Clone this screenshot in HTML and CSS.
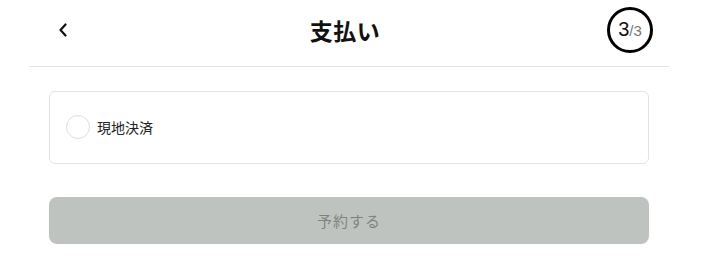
FILE: index.html
```html
<!DOCTYPE html>
<html lang="ja">
<head>
    <meta charset="UTF-8">
    <meta name="viewport" content="width=device-width, initial-scale=1.0">
    <title>支払い</title>
    <link rel="stylesheet" href="styles.css">
</head>
<body>
    <div class="page">
        <header class="header">
            <button class="back-button" aria-label="戻る">
                <svg width="10" height="14" viewBox="0 0 10 14">
                    <path d="M7.5 1.5 L2.5 7 L7.5 12.5" fill="none" stroke="#111" stroke-width="2.2" stroke-linecap="round" stroke-linejoin="round"/>
                </svg>
            </button>
            <h1 class="header-title">支払い</h1>
            <div class="step">
                <span class="step-current">3</span><span class="step-total">/3</span>
            </div>
        </header>

        <div class="payment-card">
            <label class="payment-option">
                <span class="radio"></span>
                <span class="payment-label">現地決済</span>
            </label>
        </div>

        <button class="submit-button" disabled>予約する</button>
    </div>
</body>
</html>
```

FILE: styles.css
```css
* {
    box-sizing: border-box;
    margin: 0;
    padding: 0;
}

body {
    background: #fff;
    font-family: "Noto Sans CJK JP", "Noto Sans", sans-serif;
    color: #222;
}

.page {
    width: 640px;
    margin-left: 29px;
}

/* cabecalho */
.header {
    display: flex;
    align-items: center;
    height: 67px;
    padding: 0 16px 7px 24px;
    border-bottom: 1px solid #e3e3e3;
}

.back-button {
    display: flex;
    align-items: center;
    width: 20px;
    height: 24px;
    padding-left: 5px;
    background: none;
    border: none;
}

.header-title {
    flex: 1;
    padding-left: 10px;
    text-align: center;
    font-size: 23px;
    font-weight: 700;
    color: #111;
    letter-spacing: 0.5px;
}

.step {
    display: flex;
    align-items: baseline;
    justify-content: center;
    width: 46px;
    height: 46px;
    padding-top: 8px;
    border: 3px solid #000;
    border-radius: 50%;
    font-family: "Liberation Sans", Arial, sans-serif;
}

.step-current {
    font-size: 20px;
    color: #111;
}

.step-total {
    font-size: 15px;
    color: #777;
}

/* pagamento */
.payment-card {
    display: flex;
    align-items: center;
    height: 73px;
    margin: 24px 20px 0;
    padding: 0 0 2px 16px;
    border: 1px solid #e3e3e3;
    border-radius: 6px;
}

.payment-option {
    display: flex;
    align-items: center;
    gap: 7px;
}

.radio {
    width: 24px;
    height: 24px;
    border: 1px solid #dedede;
    border-radius: 50%;
}

.payment-label {
    font-size: 14px;
    color: #222;
}

.submit-button {
    display: block;
    width: 600px;
    height: 47px;
    margin: 33px 20px 0;
    background: #bfc3bf;
    border: none;
    border-radius: 8px;
    font-family: "Noto Sans CJK JP", "Noto Sans", sans-serif;
    font-size: 15px;
    color: #7f837f;
    letter-spacing: 1px;
}
```
